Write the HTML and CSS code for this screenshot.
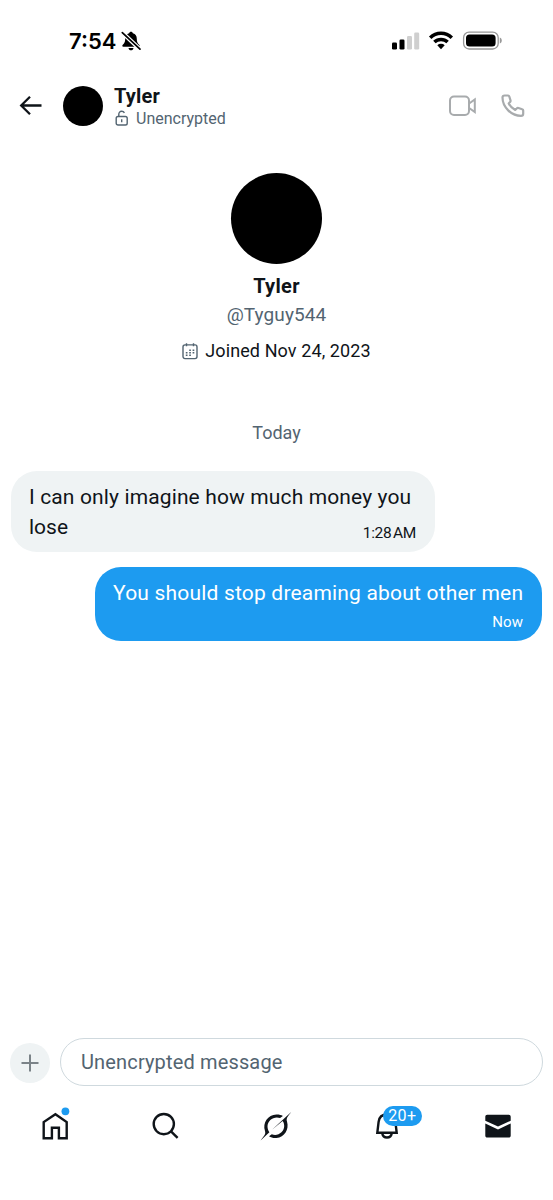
FILE: index.html
```html
<!DOCTYPE html>
<html lang="en">
<head>
<meta charset="utf-8">
<title>Tyler</title>
<link rel="stylesheet" href="styles.css">
</head>
<body>
<div class="screen">
  <div class="status">
    <span class="clock">7:54</span>
    <svg class="muted" width="20" height="20" viewBox="0 0 20 20"><path d="M10 .8c-1 0-1.700.6-1.900 1.500C5.400 3 4.200 5.100 4.200 7.800c0 4-1.300 4.800-2.600 6.300-.7.9-.3 1.700.8 1.700h15.200c1.100 0 1.500-.8.8-1.700-1.300-1.500-2.600-2.300-2.600-6.300 0-2.700-1.200-4.800-3.900-5.500C11.700 1.400 11 .8 10 .8zM7.500 16.900c.2 1.400 1.200 2.300 2.500 2.300s2.300-.9 2.500-2.300z"/><path d="M2 2.300 18.600 18" stroke="#fff" stroke-width="4.200"/><path d="M1.300 1.700 19 18.200" stroke="#000" stroke-width="1.700" stroke-linecap="round"/></svg>
    <svg class="signals" width="112" height="20" viewBox="0 0 112 20">
      <rect x="1" y="11.500" width="5" height="7" rx="1.300"/><rect x="8.500" y="8.500" width="5" height="10" rx="1.300"/>
      <g fill="#cfcfcf"><rect x="16" y="5" width="5" height="13.500" rx="1.300"/><rect x="23.200" y="1.500" width="5" height="17" rx="1.300"/></g>
      <g fill="none" stroke="#000" stroke-width="3.500"><path d="M39.200 6.700a15.500 15.500 0 0 1 21.600 0"/><path d="M43.400 11.100a9.500 9.500 0 0 1 13.200 0"/></g><path d="M46.300 14.300a5.400 5.400 0 0 1 7.400 0L50 18.200z"/>
      <rect x="72.600" y="1.200" width="34.600" height="16.800" rx="5.500" fill="none" stroke="#969696" stroke-width="1.300"/><rect x="75" y="3.600" width="29.600" height="12" rx="3.500"/><path d="M108.800 6.600v6c1.200-.4 2-1.500 2-3s-.8-2.600-2-3z" fill="#999"/>
    </svg>
  </div>

  <header class="header">
    <svg class="back" width="23" height="20" viewBox="0 0 23 20" fill="none" stroke="#0f1419" stroke-width="2.300"><path d="M2.200 9.500H22.500M11 .8 2.200 9.500l8.800 8.700"/></svg>
    <div class="avatar small"></div>
    <div class="who">
      <div class="who-name"><span>Tyler</span></div>
      <div class="secure">
        <svg width="14" height="16" viewBox="0 0 14 16" fill="none" stroke="#536471" stroke-width="1.400"><rect x="1.200" y="6.500" width="11" height="8.500" rx="1.800"/><path d="M3.800 6.500V4.300c0-1.800 1.100-3 2.900-3 1.300 0 2.200.6 2.700 1.600M6.700 9.300v2.900"/></svg>
        <span>Unencrypted</span>
      </div>
    </div>
    <div class="calls">
      <svg width="28" height="22" viewBox="0 0 28 22" fill="none" stroke="#a8abad" stroke-width="2"><rect x="2" y="1.500" width="19" height="18.500" rx="4"/><path d="M21.500 8.300 26.800 4.500v12.600L21.500 13.300"/></svg>
      <svg width="24" height="24" viewBox="0 0 24 24" fill="none" stroke="#a8abad" stroke-width="2.200" stroke-linejoin="round"><path d="M3.600 1.500h3.200c.8 0 1.300.3 1.500 1l1.200 3.900c.2.700 0 1.300-.5 1.700L7.700 9.500c1.500 2.900 3.500 4.900 6.500 6.400l1.500-1.400c.5-.5 1.100-.7 1.700-.5l3.800 1.200c.7.200 1 .7 1 1.400v3.100c0 1.300-.9 2.100-2.200 2.100C10.500 21.800 1.500 13.300 1.500 3.600c0-1.300.8-2.100 2.100-2.100z"/></svg>
    </div>
  </header>

  <section class="profile">
    <div class="avatar large"></div>
    <div class="name"><span>Tyler</span></div>
    <div class="handle"><span>@Tyguy544</span></div>
    <div class="joined">
      <svg width="16" height="17" viewBox="0 0 16 17" fill="none" stroke="#536471" stroke-width="1.400"><rect x="1" y="1.900" width="14" height="13.700" rx="2"/><path d="M4.500 .3v3M11.500 .3v3"/><path d="M7.200 7.200h1.700M10.600 7.200h1.700M3.800 9.700h1.700M7.200 9.700h1.700M10.600 9.700h1.700M3.800 12.200h1.700M7.200 12.200h1.700" stroke-width="1.500"/></svg>
      <span>Joined Nov 24, 2023</span>
    </div>
  </section>

  <main class="thread">
    <div class="day"><span>Today</span></div>
    <div class="bubble received">
      <div class="line"><span class="r1">I can only imagine how much money you</span></div>
      <div class="line last"><span>lose</span><time>1:28 AM</time></div>
    </div>
    <div class="bubble sent">
      <div class="line"><span class="s1">You should stop dreaming about other men</span></div>
      <time>Now</time>
    </div>
  </main>

  <div class="composer">
    <div class="plus"><svg width="18" height="18" viewBox="0 0 18 18" stroke="#7b8388" stroke-width="2"><path d="M9 .5v17M.5 9h17"/></svg></div>
    <div class="field"><span>Unencrypted message</span></div>
  </div>

  <nav class="tabs">
    <div class="tab"><svg width="34" height="34" viewBox="0 0 34 34" fill="none" stroke="#0f1419" stroke-width="2.400"><path d="M5.700 29.300V13.100L17.400 5.300l11.300 7.800v16.200h-7.800V18.800h-7v10.500z"/><circle cx="27.400" cy="2.300" r="3.900" fill="#1d9bf0" stroke="none"/></svg></div>
    <div class="tab"><svg width="34" height="34" viewBox="0 0 34 34" fill="none" stroke="#0f1419" stroke-width="2.400"><circle cx="14.800" cy="15.100" r="10.100"/><path d="m22 22.300 6.600 6.600"/></svg></div>
    <div class="tab"><svg width="34" height="34" viewBox="0 0 34 34" fill="#0f1419"><path d="M1.600 31.400c2.900-4 5.500-5.600 4.400-9.300C3.300 13.800 8.900 6 17.400 5.600c2.500-.1 4.700.4 6.500 1.500l-2.800 2C15.200 6.900 8.500 11.200 8.500 17.600c0 2.200.7 4.100 1.900 5.700z"/><path d="M32.200 2.900c-3.100 4.200-5.300 5.900-4.200 9.600 2.400 8.100-2.600 15.700-10.500 16.500-2.900.3-5.300-.3-7.500-1.700l2.800-2c5.900 2.200 12.400-1.900 12.400-8.200 0-2-.5-3.700-1.600-5.100L13 20.800z"/></svg></div>
    <div class="tab alert"><svg width="34" height="34" viewBox="0 0 34 34" fill="none" stroke="#0f1419" stroke-width="2.400"><path d="M7.300 23.800 8.600 12.800C9.200 8 12.500 5.500 17 5.500s7.800 2.500 8.400 7.300l1.300 11z"/><path d="M12.200 24.200c.5 2.700 2.300 4.300 4.800 4.300s4.300-1.600 4.800-4.300"/></svg><b>20+</b></div>
    <div class="tab"><svg width="34" height="34" viewBox="0 0 34 34" fill="#0f1419"><path d="M4.300 11.700V7.700c0-1.100.8-1.900 1.900-1.900h21.600c1.100 0 1.900.8 1.900 1.900v4L17 17.600zM4.300 14.500 17 20.600l12.700-6.100v12.200c0 1.100-.8 1.900-1.900 1.900H6.200c-1.100 0-1.900-.8-1.900-1.900z"/></svg></div>
  </nav>
</div>
</body>
</html>
```
FILE: styles.css
```css
* { box-sizing: border-box; }
body { margin: 0; background: #fff; color: #0f1419; font-family: Roboto, "Liberation Sans", sans-serif; }
svg { display: block; flex: none; overflow: visible; }
span, time { white-space: nowrap; }
.screen { width: 553px; height: 1200px; display: flex; flex-direction: column; overflow: hidden; }
.status { height: 82px; display: flex; align-items: center; padding: 0 50px 0 69px; }
.clock { font: 600 22px/26px Inter, sans-serif; color: #000; letter-spacing: 0; }
.muted { margin-left: 5px; }
.signals { margin-left: auto; }
.header { height: 47px; display: flex; align-items: center; padding: 0 28px 0 19px; }
.avatar { background: #000; border-radius: 50%; flex: none; }
.small { width: 40px; height: 40px; margin-left: 21px; }
.who { margin-left: 11px; }
.who-name { font-weight: 700; font-size: 20px; line-height: 24px; letter-spacing: .15px; }
.secure { display: flex; align-items: center; gap: 7px; margin-left: 1px; height: 20px; color: #536471; font-size: 16px; padding-top: 1px; }
.calls { margin-left: auto; display: flex; align-items: center; gap: 25px; }
.profile { display: flex; flex-direction: column; align-items: center; padding-top: 44px; }
.large { width: 91px; height: 91px; }
.name { margin-top: 10px; font-weight: 700; font-size: 20px; line-height: 24px; letter-spacing: .3px; }
.handle { margin-top: 5px; color: #536471; font-size: 19px; line-height: 24px; letter-spacing: .1px; }
.joined { margin-top: 12px; height: 24px; display: flex; align-items: center; gap: 7px; font-size: 18px; letter-spacing: .1px; }
.joined span { line-height: 24px; height: 24px; }
.thread { flex: 1; padding: 58px 11px 0; display: flex; flex-direction: column; }
.day { text-align: center; color: #536471; font-size: 18px; line-height: 24px; }
.bubble { border-radius: 26px; }
.line { font-size: 21px; line-height: 30px; }
.r1 { letter-spacing: .13px; }
.s1 { letter-spacing: .19px; }
.received { margin-top: 26px; width: 424px; height: 81px; padding: 11px 19px 0 18px; background: #eff3f4; }
.last { display: flex; justify-content: space-between; }
.last time { font-size: 15.500px; line-height: 42px; height: 30px; letter-spacing: -.3px; word-spacing: -2px; }
.sent { align-self: flex-end; margin-top: 15px; width: 447px; height: 74px; padding: 11px 19px 0 18px; background: #1d9bf0; color: #fff; }
.sent time { display: block; text-align: right; font-size: 15px; line-height: 28px; letter-spacing: .1px; }
.composer { height: 48px; display: flex; align-items: center; gap: 10px; padding: 0 10px; }
.plus { width: 40px; height: 40px; flex: none; margin-top: 2px; border-radius: 50%; background: #eff3f4; display: flex; align-items: center; justify-content: center; }
.field { width: 483px; flex: none; height: 48px; border: 1px solid #cfd9de; border-radius: 24px; padding-left: 20px; font-size: 20px; line-height: 47px; letter-spacing: .15px; color: #536471; }
.tabs { height: 114px; padding-top: 23px; display: flex; }
.tab { width: 110.600px; display: flex; justify-content: center; position: relative; }
.alert b { position: absolute; left: 51px; top: -3px; width: 39px; height: 20px; border-radius: 10px; background: #1d9bf0; color: #fff; font-weight: 400; font-size: 16px; line-height: 20px; text-align: center; letter-spacing: .3px; }
```
